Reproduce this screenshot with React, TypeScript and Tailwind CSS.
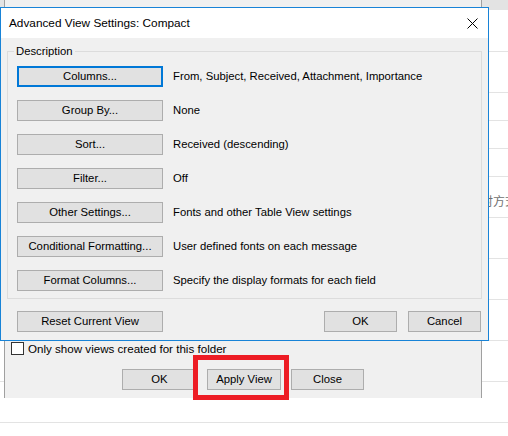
import React from "react";

function Btn({
  label,
  className = "",
}: {
  label: string;
  className?: string;
}) {
  return (
    <div
      className={
        "flex h-[21px] items-center justify-center bg-[#e1e1e1] pt-[1px] text-black leading-none " +
        className
      }
    >
      {label}
    </div>
  );
}

const rows: { label: string; desc: string; focused?: boolean }[] = [
  { label: "Columns...", desc: "From, Subject, Received, Attachment, Importance", focused: true },
  { label: "Group By...", desc: "None" },
  { label: "Sort...", desc: "Received (descending)" },
  { label: "Filter...", desc: "Off" },
  { label: "Other Settings...", desc: "Fonts and other Table View settings" },
  { label: "Conditional Formatting...", desc: "User defined fonts on each message" },
  { label: "Format Columns...", desc: "Specify the display formats for each field" },
];

export default function App() {
  return (
    <div className="relative h-[436px] w-[508px] overflow-hidden bg-white font-['Liberation_Sans',Arial,sans-serif] text-[11.3px] text-black">
      {/* background message list */}
      <div className="flex flex-col">
        <div className="h-[10px] bg-[#e3e3e3]" />
        <div className="h-[42px] border-b border-[#e3e3e3]" />
        <div className="h-[41px] border-b border-[#e3e3e3]" />
        <div className="h-[28px] border-b border-[#e3e3e3]" />
        <div className="h-[28px] border-b border-[#e3e3e3]" />
        <div className="h-[28px] border-b border-[#e3e3e3]" />
        <div className="flex h-[41px] items-center whitespace-nowrap border-b border-[#e3e3e3] pl-[481px] pt-[8px] font-['Noto_Sans_CJK_SC',sans-serif] text-[12px] text-[#707070]">
          时方式
        </div>
        <div className="h-[41px] border-b border-[#e3e3e3]" />
        <div className="h-[41px] border-b border-[#e3e3e3]" />
        <div className="h-[41px] border-b border-[#e3e3e3]" />
        <div className="h-[41px] border-b border-[#e3e3e3]" />
        <div className="h-[41px] border-b border-[#e3e3e3]" />
      </div>

      {/* dialog behind (Manage All Views) */}
      <div className="absolute left-[4px] top-0 flex h-[398px] w-[478px] flex-col justify-end border-x border-[#a0a0a0] bg-[#f0f0f0] pb-[8px]">
        <div className="flex items-center pl-[6px]">
          <div className="h-[13px] w-[13px] border border-[#333333] bg-white" />
          <span className="ml-[4px] pt-[1px] text-[11.6px] leading-none">Only show views created for this folder</span>
        </div>
        <div className="mt-[14px] flex justify-center gap-[10px]">
          <Btn label="OK" className="w-[75px] border border-[#adadad]" />
          <Btn label="Apply View" className="w-[74px] border border-[#adadad]" />
          <Btn label="Close" className="w-[73px] border border-[#adadad]" />
        </div>
      </div>

      {/* red highlight annotation */}
      <div className="absolute left-[193px] top-[355px] h-[45px] w-[96px] border-[5px] border-[#ed1c24]" />

      {/* front dialog */}
      <div className="absolute left-0 top-[7px] flex h-[334px] w-[489px] flex-col border border-[#1883d7] bg-[#f0f0f0]">
        <div className="flex h-[30px] items-center justify-between bg-white pl-[8px] pr-[10px]">
          <span className="pt-[1px] text-[11.8px] leading-none">Advanced View Settings: Compact</span>
          <svg width="11" height="11" viewBox="0 0 11 11" className="block">
            <path d="M0.5 0.5 L10.5 10.5 M10.5 0.5 L0.5 10.5" stroke="#000" strokeWidth="1" />
          </svg>
        </div>
        <div className="flex flex-1 flex-col px-[6px] pt-[13px]">
          <div className="relative flex h-[248px] flex-col gap-[13px] border border-[#dcdcdc] pb-[7px] pl-[9px] pt-[14px]">
            <span className="absolute left-[6px] top-[-8px] bg-[#f0f0f0] px-[2px] leading-[14px]">
              Description
            </span>
            {rows.map((r) => (
              <div key={r.label} className="flex items-center">
                <Btn
                  label={r.label}
                  className={
                    "w-[146px] " +
                    (r.focused ? "border-2 border-[#0078d7]" : "border border-[#adadad]")
                  }
                />
                <span className="ml-[10px] pt-[1px] leading-none">{r.desc}</span>
              </div>
            ))}
          </div>
          <div className="mt-[12px] flex items-center pl-[10px] pr-[1px]">
            <Btn label="Reset Current View" className="w-[146px] border border-[#adadad]" />
            <div className="flex-1" />
            <Btn label="OK" className="w-[73px] border border-[#adadad]" />
            <Btn label="Cancel" className="ml-[11px] w-[73px] border border-[#adadad]" />
          </div>
        </div>
      </div>
    </div>
  );
}
